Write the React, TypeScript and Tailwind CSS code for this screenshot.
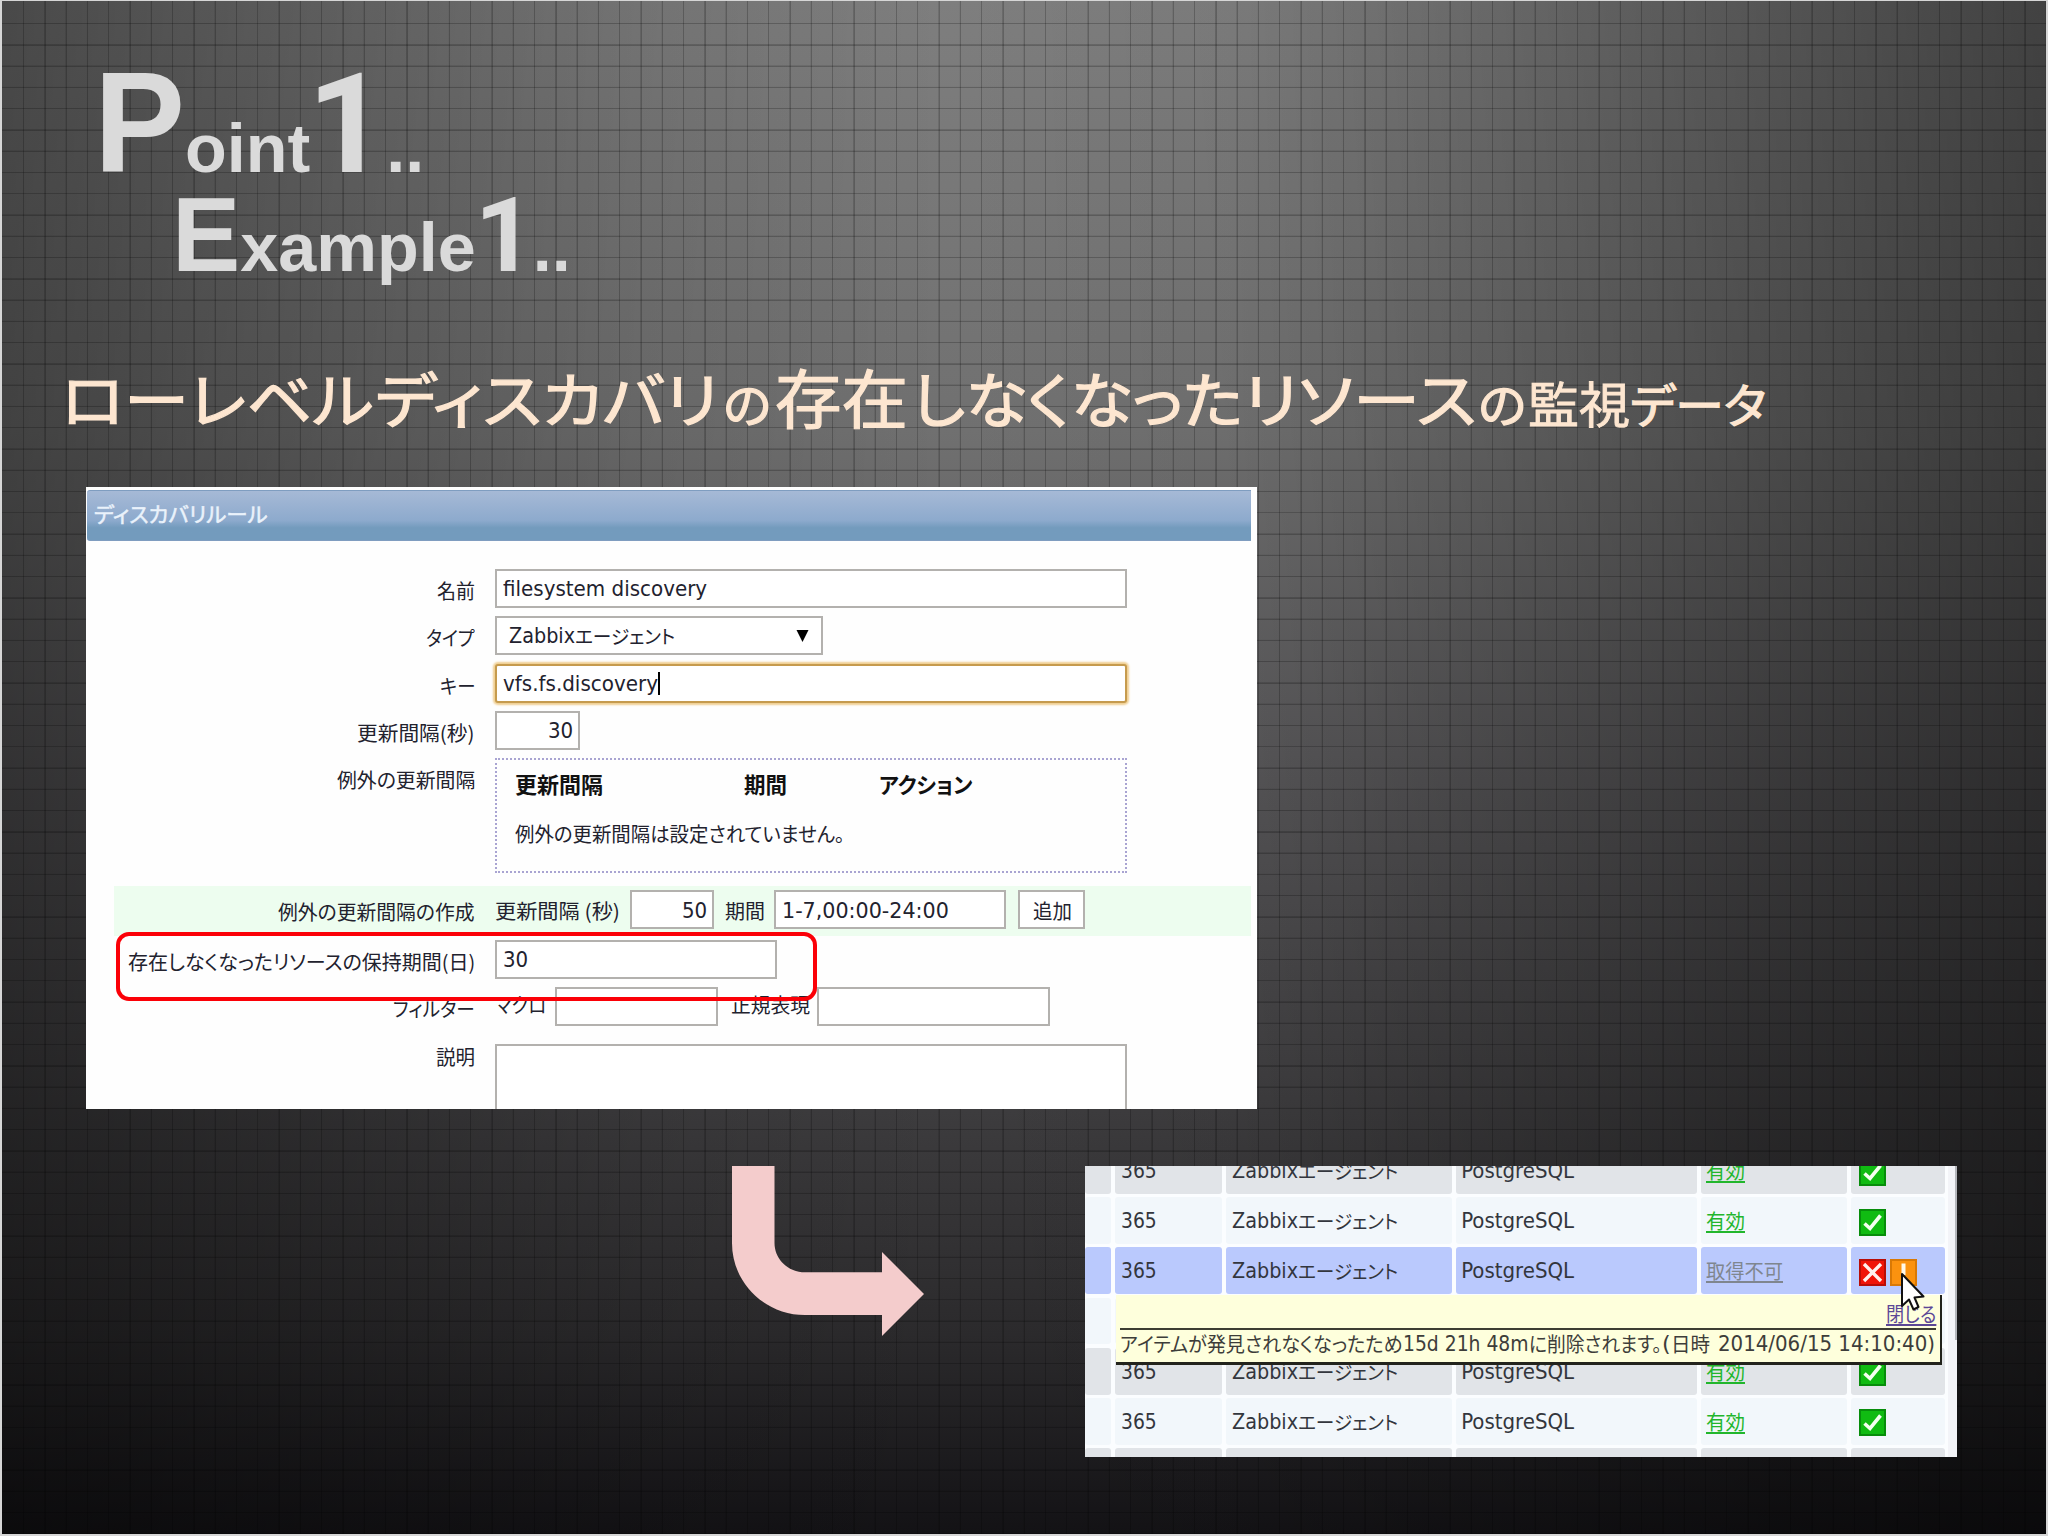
import React, { useLayoutEffect, useRef, useState } from "react";

/* Text squeezed or stretched horizontally to fill the width given by its class. */
function Fit({ children, className = "", inside = "" }: { children: React.ReactNode; className?: string; inside?: string }) {
  const box = useRef<HTMLSpanElement>(null);
  const inner = useRef<HTMLSpanElement>(null);
  const [scale, setScale] = useState(1);
  useLayoutEffect(() => {
    if (box.current && inner.current && inner.current.offsetWidth) {
      setScale(box.current.clientWidth / inner.current.offsetWidth);
    }
  }, []);
  return (
    <span ref={box} className={"inline-block shrink-0 whitespace-nowrap " + className}>
      <span ref={inner} className={"inline-block origin-left whitespace-pre " + inside} style={{ transform: `scaleX(${scale})` }}>
        {children}
      </span>
    </span>
  );
}

const jp = "font-['Noto_Sans_CJK_JP',sans-serif] [font-feature-settings:'palt']";
const latin = "font-['DejaVu_Sans_Condensed','DejaVu_Sans',sans-serif]";
const link = "underline decoration-2 underline-offset-[2px] [text-decoration-skip-ink:none]";

function Label({ w, children }: { w: string; children: string }) {
  return (
    <div className={"mr-[20px] mt-[2px] flex h-[39px] w-[389px] shrink-0 justify-end text-[20px] leading-[39px] " + jp}>
      <Fit className={w}>{children}</Fit>
    </div>
  );
}

function Box({ className = "", children }: { className?: string; children?: React.ReactNode }) {
  return (
    <div className={"flex h-[39px] shrink-0 border-2 border-[#b3b1ae] bg-white text-[22px] leading-[35px] " + className}>
      {children}
    </div>
  );
}

function Agent() {
  return (
    <>
      <Fit className={"w-[66px] " + latin}>Zabbix</Fit>
      <Fit className={"w-[100px] text-[19px] " + jp}>エージェント</Fit>
    </>
  );
}

function FormPanel() {
  return (
    <section className="relative ml-[86px] h-[622px] w-[1171px] overflow-hidden bg-[#fefefe] text-[#22222e]">
      <div className="ml-[1px] mt-[3px] flex h-[51px] w-[1164px] rounded-l-[3px] border-y border-[#7f9dc0] bg-linear-to-b from-[#a6b9d6] via-[#8daacd] via-60% to-[#739bbd] to-75% pl-[7px] text-[21px] leading-[45px] text-[#eaf2fb]">
        <Fit className={"w-[174px] [-webkit-text-stroke:0.5px_#eaf2fb] " + jp}>ディスカバリルール</Fit>
      </div>
      <div className="mt-[28px] flex h-[47.4px]">
        <Label w="w-[38px]">名前</Label>
        <Box className="w-[632px] pl-[6px]">
          <Fit className={"w-[204px] " + latin}>filesystem discovery</Fit>
        </Box>
      </div>
      <div className="flex h-[47.4px]">
        <Label w="w-[49px]">タイプ</Label>
        <Box className="w-[328px] pl-[12px]">
          <Agent />
          <svg className="ml-[121px] mt-[12px] h-[12px] w-[13px]" viewBox="0 0 13 12">
            <path d="M0.5 0H12.5L6.5 12Z" fill="#000" />
          </svg>
        </Box>
      </div>
      <div className="flex h-[47.4px]">
        <Label w="w-[35px]">キー</Label>
        <Box className="w-[632px] rounded-[3px] border-[#c69b4e] pl-[6px] shadow-[0_0_2px_2px_#f0cf92]">
          <Fit className={"w-[155px] " + latin}>vfs.fs.discovery</Fit>
          <span className="mt-[6px] h-[23px] w-[2px] bg-black" />
        </Box>
      </div>
      <div className="flex h-[46.8px]">
        <Label w="w-[118px]">更新間隔(秒)</Label>
        <Box className="w-[85px] justify-end pr-[5px]">
          <Fit className={"w-[25px] " + latin}>30</Fit>
        </Box>
      </div>
      <div className="flex h-[128px]">
        <Label w="w-[138px]">例外の更新間隔</Label>
        <div className={"h-[115px] w-[632px] border-2 border-dotted border-[#a9a4d2] pl-[18px] pt-[4px] " + jp}>
          <div className="flex h-[39px] text-[22px] leading-[39px] font-bold text-[#111]">
            <Fit className="w-[88px]">更新間隔</Fit>
            <Fit className="ml-[141px] w-[43px]">期間</Fit>
            <Fit className="ml-[92px] w-[93px]">アクション</Fit>
          </div>
          <div className="mt-[10px] flex text-[20px] leading-[41px]">
            <Fit className="w-[330px]">例外の更新間隔は設定されていません。</Fit>
          </div>
        </div>
      </div>
      <div className="relative h-[50px]">
        <div className="ml-[28px] h-full w-[1137px] bg-[#edfdef]" />
        <div className="absolute inset-0 flex pt-[4px]">
          <Label w="w-[197px]">例外の更新間隔の作成</Label>
          <Fit className={"w-[125px] text-[20px] leading-[41px] " + jp}>更新間隔 (秒)</Fit>
          <Box className="ml-[10px] w-[84px] justify-end pr-[5px]">
            <Fit className={"w-[25px] leading-[37px] " + latin}>50</Fit>
          </Box>
          <Fit className={"ml-[11px] w-[40px] text-[20px] leading-[41px] " + jp}>期間</Fit>
          <Box className="ml-[9px] w-[232px] pl-[6px]">
            <Fit className={"w-[167px] leading-[37px] " + latin}>1-7,00:00-24:00</Fit>
          </Box>
          <Box className="ml-[12px] w-[67px] pl-[13px]">
            <Fit className={"w-[39px] text-[20px] leading-[37px] " + jp}>追加</Fit>
          </Box>
        </div>
      </div>
      <div className="flex h-[47px] pt-[4px]">
        <Label w="w-[347px]">存在しなくなったリソースの保持期間(日)</Label>
        <Box className="w-[282px] pl-[6px]">
          <Fit className={"w-[25px] " + latin}>30</Fit>
        </Box>
      </div>
      <div className="flex h-[57px] pt-[4px]">
        <Label w="w-[82px]">フィルター</Label>
        <Fit className={"w-[51px] text-[20px] leading-[36px] " + jp}>マクロ</Fit>
        <Box className="ml-[9px] w-[163px]" />
        <Fit className={"ml-[13px] w-[79px] text-[20px] leading-[36px] " + jp}>正規表現</Fit>
        <Box className="ml-[7px] w-[233px]" />
      </div>
      <div className="flex pt-[4px]">
        <div className="-mt-[9px]">
          <Label w="w-[39px]">説明</Label>
        </div>
        <Box className="h-[80px] w-[632px]" />
      </div>
      <div className="absolute left-[30px] top-[445px] h-[69px] w-[701px] rounded-[13px] border-4 border-[#fb0007]" />
    </section>
  );
}

function Check() {
  return (
    <svg className="size-[27px]" viewBox="0 0 27 27">
      <rect x="1" y="1" width="25" height="25" fill="#10bb12" stroke="#078d0b" strokeWidth="2" />
      <path d="M5.5 14.5L11 19.5L21.5 6.5" fill="none" stroke="#f4fff0" strokeWidth="3.6" />
    </svg>
  );
}

function Cross() {
  return (
    <svg className="size-[27px]" viewBox="0 0 27 27">
      <rect x="1" y="1" width="25" height="25" fill="#f01408" stroke="#b90d06" strokeWidth="2" />
      <path d="M5 5L22 22M22 5L5 22" fill="none" stroke="#fff1ee" strokeWidth="3.4" />
    </svg>
  );
}

function Warn() {
  return (
    <svg className="ml-[4px] size-[27px]" viewBox="0 0 27 27">
      <rect x="1" y="1" width="25" height="25" fill="#fb920f" stroke="#d97905" strokeWidth="2" />
      <path d="M13.5 4.5V16M13.5 18.5V22" stroke="#fff8e8" strokeWidth="4" />
    </svg>
  );
}

type Tone = "gray" | "light" | "blue";
const rows: { tone: Tone; empty?: boolean }[] = [
  { tone: "gray" },
  { tone: "light" },
  { tone: "blue" },
  { tone: "light", empty: true },
  { tone: "gray" },
  { tone: "light" },
  { tone: "gray", empty: true },
];
const tones: Record<Tone, string> = {
  gray: "bg-[#e1e4e8]",
  light: "bg-[#f2f7fb]",
  blue: "bg-[#bac9fd]",
};

function Row({ tone, empty }: { tone: Tone; empty?: boolean }) {
  const cell = "flex rounded-[3px] " + tones[tone];
  return (
    <div className="grid h-[46.6px] shrink-0 grid-cols-[26px_107.5px_226px_241px_146px_94.5px] gap-x-[3.9px] text-[22px] leading-[47px] text-[#33363d]">
      <div className={cell} />
      <div className={cell + " pl-[6px]"}>{!empty && <Fit className={"w-[36px] " + latin}>365</Fit>}</div>
      <div className={cell + " pl-[6px]"}>{!empty && <Agent />}</div>
      <div className={cell + " pl-[5px]"}>{!empty && <Fit className={"w-[113px] " + latin}>PostgreSQL</Fit>}</div>
      <div className={cell + " pl-[5px] text-[20px] leading-[47px] " + jp}>
        {!empty &&
          (tone === "blue" ? (
            <Fit className="w-[77px] text-[#7f868f]" inside={link}>
              取得不可
            </Fit>
          ) : (
            <Fit className="w-[39px] text-[#22b62c]" inside={link}>
              有効
            </Fit>
          ))}
      </div>
      <div className={cell + " pl-[8px] pt-[11.5px]"}>
        {!empty &&
          (tone === "blue" ? (
            <>
              <Cross />
              <Warn />
            </>
          ) : (
            <Check />
          ))}
      </div>
    </div>
  );
}

function TablePanel() {
  return (
    <section className="relative h-[291px] w-[872px] overflow-hidden bg-[#fbfdff]">
      <div className="-mt-[19px] flex flex-col gap-[3.6px]">
        {rows.map((row, i) => (
          <Row key={i} {...row} />
        ))}
      </div>
      <div className="absolute right-0 top-0 h-full w-[9px] bg-[#f3f4f8]" />
      <div className="absolute right-0 top-0 h-[174px] w-[2px] bg-[#b4b6bb]" />
      <div className="absolute left-[31px] top-[129px] h-[70px] w-[826px] border-b-[3px] border-r-2 border-[#22231c] bg-[#feffdc] pl-[4px] pr-[4px] text-[#3d3d3a]">
        <div className="flex h-[35px] justify-end border-b-2 border-[#3d3d33] text-[20px] leading-[37px]">
          <Fit className={"w-[50px] text-[#5b4796] " + jp} inside={link}>
            閉じる
          </Fit>
        </div>
        <div className="flex text-[22px] leading-[28px]">
          <Fit className={"w-[283px] text-[20px] " + jp}>アイテムが発見されなくなったため</Fit>
          <Fit className={"w-[126px] " + latin}>15d 21h 48m</Fit>
          <Fit className={"w-[133px] text-[20px] " + jp}>に削除されます。</Fit>
          <Fit className={"w-[9px] " + latin}>(</Fit>
          <Fit className={"w-[39px] text-[20px] " + jp}>日時</Fit>
          <Fit className={"ml-[8px] w-[217px] " + latin}>2014/06/15 14:10:40)</Fit>
        </div>
      </div>
      <svg className="absolute left-[815px] top-[106px] h-[42px] w-[28px]" viewBox="0 0 28 42">
        <path
          d="M2 2V34L9 27.5L13.5 37.5L18.5 35L14.5 25.5L23.5 24.5Z"
          fill="#fff"
          stroke="#111"
          strokeWidth="2"
          strokeLinejoin="round"
        />
      </svg>
    </section>
  );
}

export default function App() {
  return (
    <main className="h-[1536px] w-[2048px] overflow-hidden border-b-2 border-l-2 border-r-2 border-t border-[#d6d6d6] bg-[linear-gradient(90deg,rgba(0,0,0,0.42)_0%,rgba(0,0,0,0.28)_14%,rgba(0,0,0,0.09)_31%,transparent_46%,rgba(0,0,0,0.03)_60%,rgba(0,0,0,0.24)_78%,rgba(0,0,0,0.48)_100%),linear-gradient(180deg,#7e7e7e_0%,#707070_28%,#575658_50%,#403f41_70%,#2b2a2c_87%,#131215_100%)]">
      <div className="-ml-[2px] -mt-[1px] h-[1536px] w-[2048px] bg-[repeating-linear-gradient(90deg,transparent_0_19.6px,rgba(0,0,0,0.22)_20.4px_21.29px),repeating-linear-gradient(180deg,transparent_0_19.6px,rgba(0,0,0,0.22)_20.4px_21.27px)] bg-[position:3px_3px]">
        <div className="flex h-[363px] flex-col pt-[57px] font-['Liberation_Sans',Arial,sans-serif] font-bold text-[#dadada]">
          <div className="flex h-[136px] items-baseline pl-[94px] text-[136.5px] leading-[136px]">
            <span className="origin-[0_115px] scale-y-[1.04]">P</span>
            <span className="text-[68.3px] leading-[68px]">oint</span>
            <span className="-ml-[3px] w-[79px] font-['Roboto'] text-[139px]">1</span>
            <span className="text-[68.3px] leading-[68px]">..</span>
          </div>
          <div className="mt-[3px] flex h-[80px] items-baseline pl-[172px] text-[102.4px] leading-[80px]">
            <span className="origin-[0_75px] scale-y-[1.04]">E</span>
            <span className="text-[68.3px] leading-[68px]">xample</span>
            <span className="-ml-[1px] w-[58px] font-['Roboto'] text-[104px]">1</span>
            <span className="text-[68.3px] leading-[68px]">..</span>
          </div>
        </div>
        <div className={"flex h-[124px] items-baseline pl-[61px] text-[60px] leading-[65px] text-[#fde6d0] [-webkit-text-stroke:1.2px_#fde6d0] " + jp}>
          <Fit className="w-[313px]">ローレベル</Fit>
          <Fit className="ml-[1px] w-[344px]">ディスカバリ</Fit>
          <Fit className="ml-[4px] w-[48px] text-[48px] leading-[50px]">の</Fit>
          <Fit className="ml-[4px] w-[133px] text-[64px]">存在</Fit>
          <Fit className="ml-[4px] w-[331px]">しなくなった</Fit>
          <Fit className="w-[234px]">リソース</Fit>
          <Fit className="ml-[1px] w-[48px] text-[48px] leading-[50px]">の</Fit>
          <Fit className="ml-[2px] w-[102px] text-[49px] leading-[50px] [-webkit-text-stroke:0.8px_#fde6d0]">監視</Fit>
          <Fit className="w-[136px] text-[47px] leading-[50px]">データ</Fit>
        </div>
        <FormPanel />
        <div className="flex pl-[732px] pt-[57px]">
          <svg className="mr-[161px] h-[171px] w-[192px]" viewBox="0 0 192 171">
            <path
              d="M0 0H42.5V77C42.5 93 56 106.3 73 106.3H150V86L192 128L150 170V149H73C33 149 0 117 0 77Z"
              fill="#f4cccc"
            />
          </svg>
          <TablePanel />
        </div>
      </div>
    </main>
  );
}
